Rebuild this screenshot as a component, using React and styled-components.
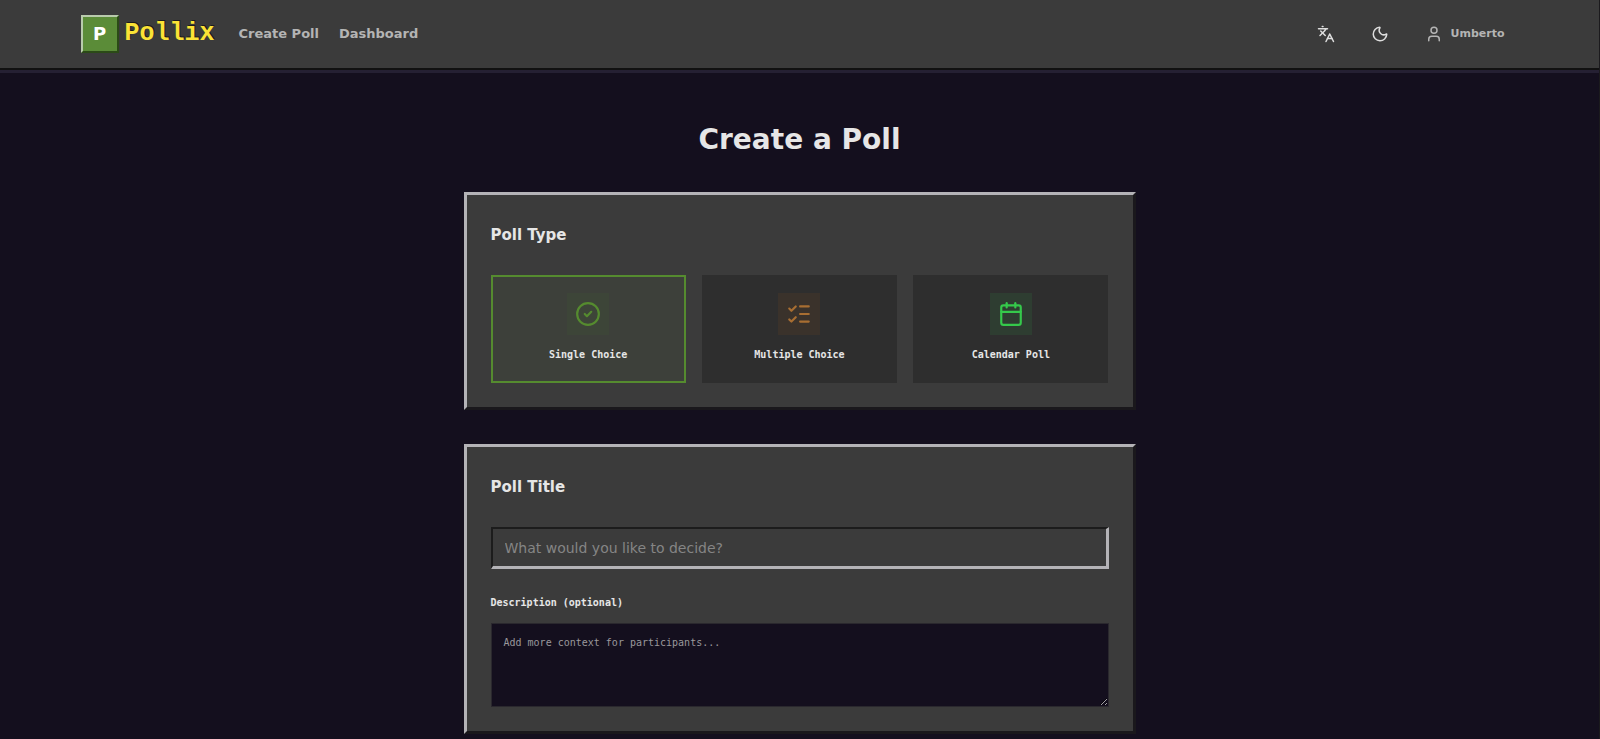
import * as React from "react";
import styled, { createGlobalStyle } from "styled-components";
import { Calendar, CircleCheck, Languages, ListChecks, Moon, User } from "lucide-react";

const GlobalStyle = createGlobalStyle`
  *, *::before, *::after {
    box-sizing: border-box;
  }

  body {
    background: #140f1e;
    border-right: 1px solid #1b1a1d;
    color: #e6e6e6;
    font-family: "DejaVu Sans", sans-serif;
    margin: 0;
  }
`;

const SHeader = styled.header`
  background: #3b3b3b;
  border-bottom: 2px solid #111111;
  box-shadow: 0 3px 0 #252033;
`;

const SNavBar = styled.div`
  align-items: center;
  display: flex;
  height: 68px;
  justify-content: space-between;
  margin: 0 auto;
  max-width: 1438px;
`;

const SNav = styled.nav`
  align-items: center;
  display: flex;
  gap: 20px;
`;

const SLogo = styled.a`
  align-items: center;
  color: #fbe336;
  display: flex;
  font: bold 25px/32px "Liberation Mono", monospace;
  gap: 6px;
  margin-right: 4px;
  text-decoration: none;
  text-shadow: 1px -1px 0 #1c1c1c;
`;

const SLogoMark = styled.span`
  align-items: center;
  background: #5b8c38;
  border: 2px solid;
  border-color: #b9cbac #2b4a17 #2b4a17 #b9cbac;
  color: #ffffff;
  display: flex;
  font: bold 18px/24px "DejaVu Sans", sans-serif;
  height: 38px;
  justify-content: center;
  text-shadow: none;
  width: 38px;
`;

const SNavLink = styled.a`
  color: #b4b4b4;
  font-size: 13px;
  font-weight: bold;
  line-height: 20px;
  text-decoration: none;
`;

const SActions = styled.div`
  align-items: center;
  display: flex;
  gap: 8px;
`;

const SIconButton = styled.button`
  align-items: center;
  background: none;
  border: 0;
  color: ${({ $muted }) => ($muted ? "#b4b4b4" : "#dedede")};
  cursor: pointer;
  display: flex;
  font: bold 11px/20px "DejaVu Sans", sans-serif;
  gap: 8px;
  height: 36px;
  padding: 0 14px;
`;

const SMain = styled.main`
  display: flex;
  flex-direction: column;
  gap: 34px;
  margin: 0 auto;
  max-width: 672px;
  padding: 52px 0 34px;
`;

const SPageTitle = styled.h1`
  font-size: 28px;
  line-height: 36px;
  margin: 0;
  text-align: center;
`;

const SCard = styled.section`
  background: #3b3b3b;
  border: 3px solid;
  border-color: #b4b3b7 #1a181c #1a181c #b4b3b7;
  padding: 24px;
`;

const SCardTitle = styled.h2`
  font-size: 15px;
  line-height: 32px;
  margin: 0 0 24px;
`;

const SPollTypes = styled.div`
  display: grid;
  gap: 16px;
  grid-template-columns: repeat(3, 1fr);
`;

const SPollType = styled.button`
  align-items: center;
  background: ${({ $selected }) => ($selected ? "#3d403a" : "#2e2e2e")};
  border: 2px solid ${({ $selected }) => ($selected ? "#558b2f" : "#2e2e2e")};
  color: #e6e6e6;
  cursor: pointer;
  display: flex;
  flex-direction: column;
  font: bold 10px/20px "DejaVu Sans Mono", monospace;
  gap: 10px;
  padding: 16px;
`;

const STypeIcon = styled.span`
  background: ${({ $background }) => $background};
  color: ${({ $color }) => $color};
  display: flex;
  padding: 8px;
`;

const STitleInput = styled.input`
  background: #3b3b3b;
  border: solid;
  border-color: #1c1c1c #b4b3b7 #b4b3b7 #1c1c1c;
  border-width: 2px 3px 3px 2px;
  color: #e6e6e6;
  display: block;
  font: 14px/20px "DejaVu Sans", sans-serif;
  height: 42px;
  padding: 0 12px;
  width: 100%;

  &::placeholder {
    color: #858585;
  }
`;

const SLabel = styled.label`
  display: block;
  font: bold 10px/20px "DejaVu Sans Mono", monospace;
  margin: 24px 0 10px;
`;

const STextarea = styled.textarea`
  background: #140f1e;
  border: 1px solid #2a282e;
  color: #e6e6e6;
  display: block;
  font: 10px/20px "DejaVu Sans Mono", monospace;
  height: 84px;
  padding: 9px 12px;
  resize: vertical;
  width: 100%;

  &::placeholder {
    color: #9a989c;
  }
`;

const pollTypes = [
  { id: "single", label: "Single Choice", Icon: CircleCheck, color: "#558b2f", background: "#3d4538" },
  { id: "multiple", label: "Multiple Choice", Icon: ListChecks, color: "#a86e32", background: "#3a322b" },
  { id: "calendar", label: "Calendar Poll", Icon: Calendar, color: "#35c94b", background: "#2e3d31" },
];

const App = () => {
  const [pollType, setPollType] = React.useState("single");

  return (
    <React.Fragment>
      <GlobalStyle />
      <SHeader>
        <SNavBar>
          <SNav>
            <SLogo href="#home">
              <SLogoMark>P</SLogoMark>
              Pollix
            </SLogo>
            <SNavLink href="#create">Create Poll</SNavLink>
            <SNavLink href="#dashboard">Dashboard</SNavLink>
          </SNav>
          <SActions>
            <SIconButton type="button" aria-label="Language">
              <Languages size={18} />
            </SIconButton>
            <SIconButton type="button" aria-label="Theme">
              <Moon size={18} />
            </SIconButton>
            <SIconButton type="button" $muted>
              <User size={18} />
              Umberto
            </SIconButton>
          </SActions>
        </SNavBar>
      </SHeader>
      <SMain>
        <SPageTitle>Create a Poll</SPageTitle>
        <SCard>
          <SCardTitle>Poll Type</SCardTitle>
          <SPollTypes>
            {pollTypes.map(({ id, label, Icon, color, background }) => (
              <SPollType
                key={id}
                type="button"
                aria-pressed={pollType === id}
                $selected={pollType === id}
                onClick={() => setPollType(id)}
              >
                <STypeIcon $color={color} $background={background}>
                  <Icon size={26} />
                </STypeIcon>
                {label}
              </SPollType>
            ))}
          </SPollTypes>
        </SCard>
        <SCard>
          <SCardTitle id="poll-title">Poll Title</SCardTitle>
          <STitleInput aria-labelledby="poll-title" placeholder="What would you like to decide?" />
          <SLabel htmlFor="description">Description (optional)</SLabel>
          <STextarea id="description" placeholder="Add more context for participants..." />
        </SCard>
      </SMain>
    </React.Fragment>
  );
};

export default App;
